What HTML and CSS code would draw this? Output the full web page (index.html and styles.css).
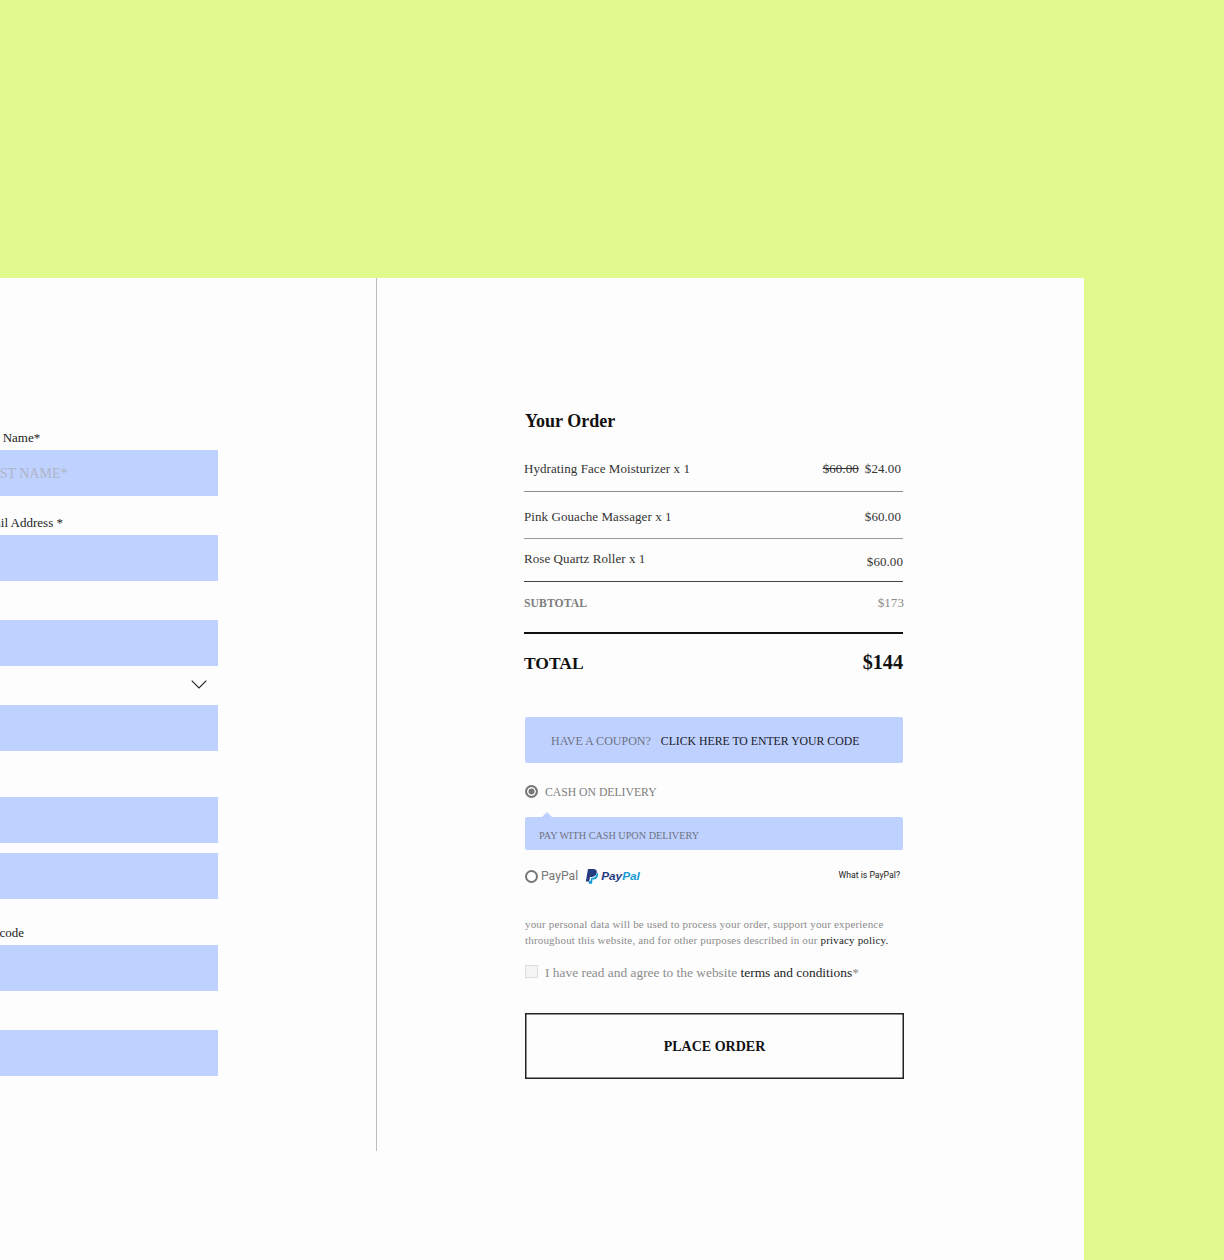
FILE: index.html
```html
<!DOCTYPE html>
<html lang="en">
<head>
<meta charset="utf-8">
<title>Checkout</title>
<link rel="stylesheet" href="styles.css">
</head>
<body>
<main class="panel">
  <section class="billing">
    <form class="form">
      <div class="group g-name"><label class="label">Last Name*</label><div class="field placeholder">LAST NAME*</div></div>
      <div class="group g-next"><label class="label">Email Address *</label><div class="field"></div></div>
      <div class="group g-plain"><div class="field"></div></div>
      <div class="group g-select">
        <svg class="chevron" width="16" height="9" viewBox="0 0 16 9"><path d="M.7.7 8 8 15.3.7" fill="none" stroke="#222" stroke-width="1.1"/></svg>
        <div class="field"></div>
      </div>
      <div class="group g-addr"><div class="field"></div></div>
      <div class="group g-addr2"><div class="field"></div></div>
      <div class="group g-post"><label class="label">Postcode</label><div class="field"></div></div>
      <div class="group g-plain"><div class="field"></div></div>
    </form>
  </section>
  <section class="order">
    <h2 class="title">Your Order</h2>
    <div class="row row-1"><span>Hydrating Face Moisturizer x 1</span><span class="prices"><s>$60.00</s><span>$24.00</span></span></div>
    <div class="row row-2"><span>Pink Gouache Massager x 1</span><span class="prices">$60.00</span></div>
    <div class="row row-3"><span>Rose Quartz Roller x 1</span><span class="price-low">$60.00</span></div>
    <div class="row row-sub"><span class="sub-label">SUBTOTAL</span><span class="sub-value">$173</span></div>
    <div class="row row-total"><span>TOTAL</span><span class="total-value">$144</span></div>
    <div class="coupon"><span class="muted">HAVE A COUPON?</span><a class="coupon-link">CLICK HERE TO ENTER YOUR CODE</a></div>
    <div class="pay-cash"><span class="radio radio-on"></span><span>CASH ON DELIVERY</span></div>
    <div class="pay-note">PAY WITH CASH UPON DELIVERY</div>
    <div class="pay-paypal">
      <span class="radio"></span>
      <span class="pp-label">PayPal</span>
      <svg class="pp-mark" width="13" height="15" viewBox="0 0 13 15"><path fill="#253b80" d="M3 0h5.200c2.600 0 4 1.300 3.600 3.600-.5 2.900-2.400 4.300-5 4.300H5L4.200 12.600H.8z"/><path fill="#179bd7" d="M11.900 3.400c1.300.7 1.400 2 1 3.500-.6 2.400-2.200 3.500-4.400 3.500h-1L7 14.700H3.600l.5-2.600h1.400l.7-3.400h1.300c2.500 0 4-1.900 4.400-5.300z"/></svg>
      <span class="pp-word"><span class="pp-pay">Pay</span><span class="pp-pal">Pal</span></span>
      <a class="pp-what">What is PayPal?</a>
    </div>
    <p class="privacy">your personal data will be used to process your order, support your experience throughout this website, and for other purposes described in our <a class="dark">privacy policy.</a></p>
    <div class="terms"><span class="check"></span><span>I have read and agree to the website <a class="dark">terms and conditions</a>*</span></div>
    <button class="place" type="button">PLACE ORDER</button>
  </section>
</main>
</body>
</html>
```
FILE: styles.css
```css
* { box-sizing: border-box; }
html, body { margin: 0; padding: 0; }
body {
  background: #e2f98e;
  height: 1260px;
  overflow: hidden;
  padding-top: 278px;
  font-family: "Liberation Serif", "Times New Roman", serif;
  color: #222;
}
.panel {
  width: 1084px;
  height: 982px;
  background: #fdfdfd;
  display: flex;
  align-items: flex-start;
  overflow: hidden;
}
.billing {
  width: 377px;
  height: 873px;
  flex: none;
  border-right: 1px solid #bdbdbd;
  overflow: hidden;
}
.form {
  width: 398px;
  margin-left: -180px;
  padding-top: 150px;
}
.group { position: relative; }
.label {
  display: block;
  height: 22px;
  font-size: 13px;
  line-height: 20px;
  padding-left: 157px;
  color: #222;
}
.field {
  height: 46px;
  background: #bfd1ff;
  font-size: 14px;
  line-height: 48px;
  padding-left: 161px;
}
.placeholder { color: #aeb4c6; }
.g-next { margin-top: 17px; }
.g-plain { margin-top: 39px; }
.g-select { padding-top: 39px; }
.g-addr { margin-top: 46px; }
.g-addr2 { margin-top: 10px; }
.g-post { margin-top: 24px; }
.chevron { position: absolute; top: 14px; right: 11px; }

.order {
  width: 380px;
  margin-left: 147px;
  padding-top: 133px;
  flex: none;
}
.title {
  margin: 0 0 16px 1px;
  font-size: 18px;
  line-height: 20px;
  font-weight: 700;
  color: #111;
}
.row {
  display: flex;
  justify-content: space-between;
  width: 379px;
  font-size: 13px;
  letter-spacing: .07px;
  color: #333;
}
.row-1 { height: 45px; padding: 14px 2px 0 0; line-height: 16px; border-bottom: 1px solid #8c8c8c; }
.row-2 { height: 47px; padding: 17px 2px 0 0; line-height: 16px; border-bottom: 1px solid #999; }
.row-3 { height: 43px; padding: 12px 0 0; line-height: 16px; border-bottom: 1px solid #444; }
.prices { display: flex; gap: 6px; }
.price-low { margin-top: 3px; }
.row-sub { height: 52px; padding: 14px 0 0; line-height: 16px; border-bottom: 2px solid #111; }
.sub-label { font-weight: 700; color: #7d7d7d; font-size: 11.7px; }
.sub-value { color: #8a8a8a; margin: -1px -1px 0 0; }
.row-total {
  height: 58px;
  padding-top: 17px;
  align-items: baseline;
  line-height: 22px;
  font-size: 17.5px;
  font-weight: 700;
  color: #111;
  letter-spacing: 0;
}
.total-value { font-size: 20.2px; }

.coupon {
  width: 378px;
  height: 46px;
  margin: 25px 0 0 1px;
  padding: 2px 0 0 26px;
  background: #bfd1ff;
  border-radius: 2px;
  display: flex;
  align-items: center;
  gap: 10px;
  font-size: 12px;
}
.muted { color: #6d7282; }
.coupon-link { color: #1a1a2a; font-size: 11.75px; }
.pay-cash {
  display: flex;
  align-items: center;
  gap: 7px;
  height: 16px;
  margin: 20px 0 0 1px;
  font-size: 11.7px;
  color: #7d7d7d;
}
.pay-cash span:last-child { margin-top: 2px; }
.radio {
  width: 13px;
  height: 13px;
  flex: none;
  display: block;
  border: 2px solid #777;
  border-radius: 50%;
  background: #fff;
}
.radio-on { background: #777; box-shadow: inset 0 0 0 1.5px #fff; }
.pay-note {
  position: relative;
  width: 378px;
  height: 33px;
  margin: 18px 0 0 1px;
  padding-left: 14px;
  background: #bfd1ff;
  border-radius: 2px;
  font-size: 10.2px;
  line-height: 37px;
  color: #6d7282;
}
.pay-note::before {
  content: "";
  position: absolute;
  top: -5px;
  left: 17px;
  border: 5px solid transparent;
  border-top: 0;
  border-bottom-color: #bfd1ff;
}
.pay-paypal {
  width: 378px;
  height: 20px;
  margin: 16px 0 0 1px;
  display: flex;
  align-items: center;
  font-family: Roboto, "Liberation Sans", sans-serif;
}
.pp-label { margin-left: 3px; font-size: 12.2px; color: #777; }
.pp-mark { margin-left: 7px; }
.pp-word {
  margin-left: 3px;
  font-family: "Liberation Sans", Arial, sans-serif;
  font-size: 11.8px;
  font-style: italic;
  font-weight: 700;
}
.pp-pay { color: #253b80; }
.pp-pal { color: #179bd7; }
.pp-what { margin-left: auto; margin-right: 3px; margin-top: -3px; font-size: 8.7px; color: #222; }
.privacy {
  width: 378px;
  margin: 30px 0 0 1px;
  font-size: 11px;
  line-height: 16px;
  color: #8c8c8c;
  letter-spacing: .18px;
}
.dark { color: #222; }
.terms {
  display: flex;
  align-items: flex-start;
  gap: 7px;
  margin: 17px 0 0 1px;
  font-size: 13.4px;
  line-height: 16px;
  color: #8c8c8c;
}
.check {
  width: 13px;
  height: 13px;
  flex: none;
  background: #f5f5f5;
  border: 1px solid #ddd;
}
.place {
  display: block;
  width: 379px;
  height: 66px;
  margin: 32px 0 0 1px;
  padding: 1px 0 0;
  background: transparent;
  border: 0;
  box-shadow: inset 0 0 0 1.5px #222;
  font-family: inherit;
  font-size: 14px;
  font-weight: 700;
  color: #111;
}
```
